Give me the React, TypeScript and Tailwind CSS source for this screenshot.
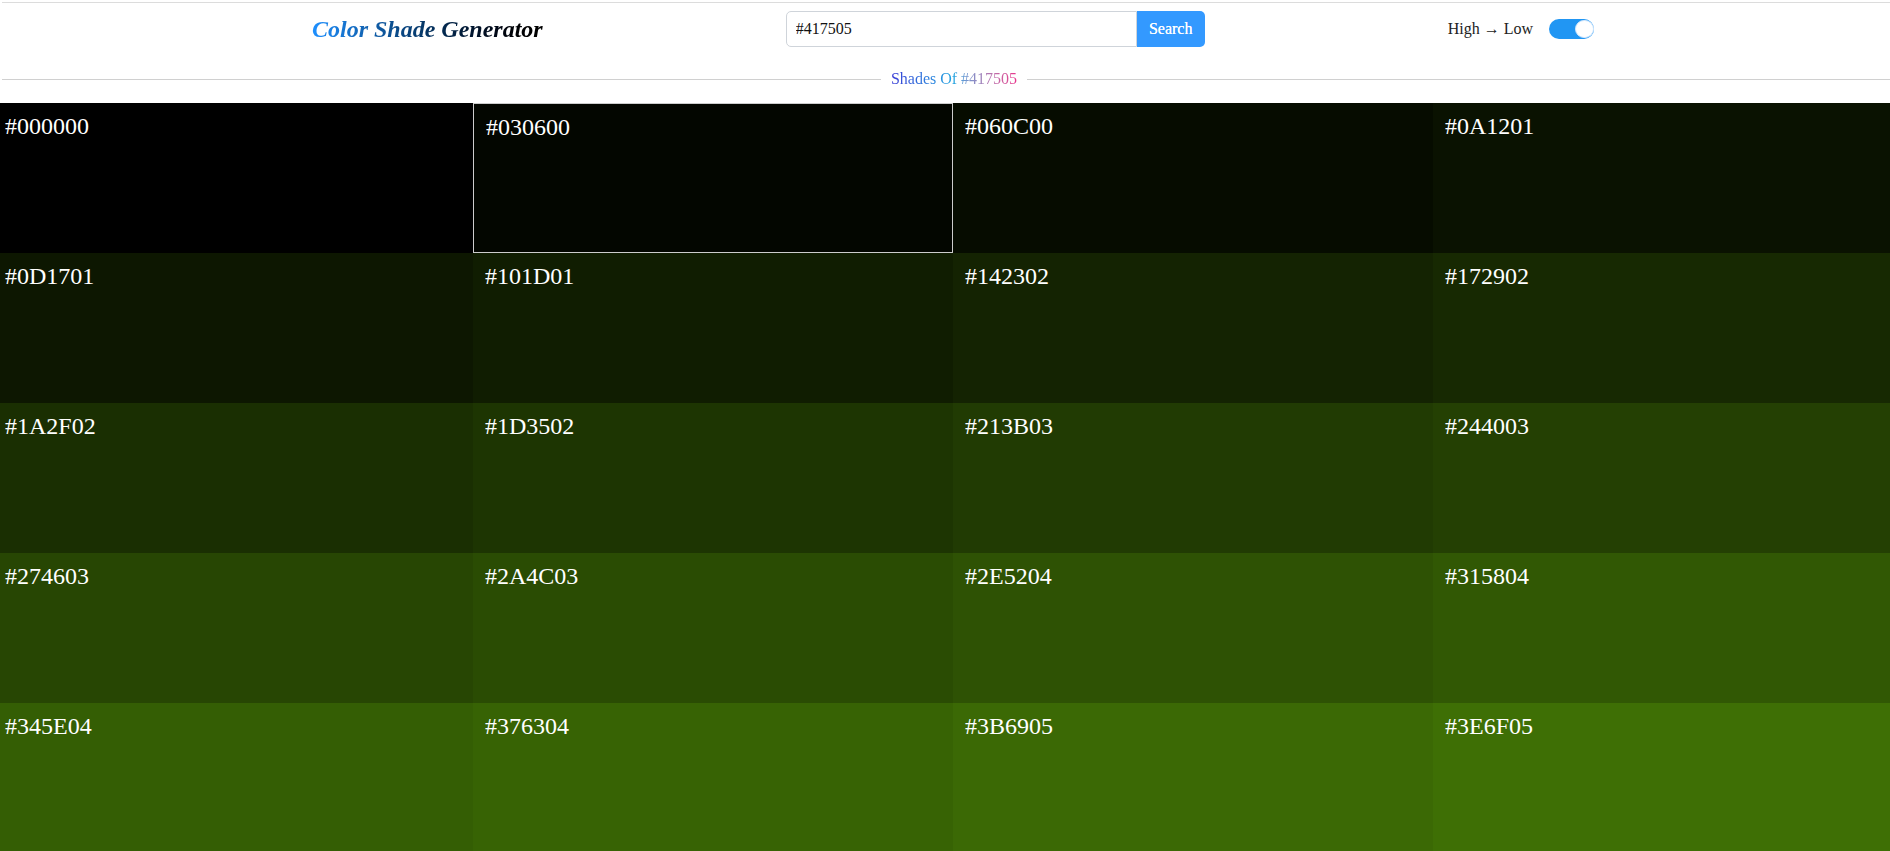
import React from 'react';

const BASE = '#417505';

const toHex = (n: number) => Math.round(n).toString(16).padStart(2, '0').toUpperCase();

// shades from black up to the base colour (as the app prints them)
const DARK = [
  '#000000', '#030600', '#060C00', '#0A1201',
  '#0D1701', '#101D01', '#142302', '#172902',
  '#1A2F02', '#1D3502', '#213B03', '#244003',
  '#274603', '#2A4C03', '#2E5204', '#315804',
  '#345E04', '#376304', '#3B6905', '#3E6F05',
];

const buildTints = (hex: string): string[] => {
  const r = parseInt(hex.slice(1, 3), 16);
  const g = parseInt(hex.slice(3, 5), 16);
  const b = parseInt(hex.slice(5, 7), 16);
  const out: string[] = [];
  for (let i = 0; i < 20; i++) {
    const k = i / 20;
    out.push('#' + toHex(r + (255 - r) * k) + toHex(g + (255 - g) * k) + toHex(b + (255 - b) * k));
  }
  return out;
};

const Header: React.FC = () => (
  <header className="flex h-[52px] items-center justify-center gap-[243px]">
    <h1 className="bg-linear-to-r from-[#1e90ff] to-black bg-clip-text text-[24px] font-bold italic leading-[28px] text-transparent">
      Color Shade Generator
    </h1>

    <form className="flex h-[36px]" onSubmit={(e) => e.preventDefault()}>
      <input
        type="text"
        defaultValue={BASE}
        className="h-full w-[351px] rounded-l-[5px] border border-[#cfd4da] bg-white px-[9px] text-[16px] text-[#111] outline-none"
      />
      <button type="submit" className="h-full w-[68px] rounded-r-[5px] bg-[#3399ff] text-[16px] text-white [text-shadow:0_0_0.4px_white]">
        Search
      </button>
    </form>

    <div className="flex items-center gap-[16px]">
      <span className="text-[16px] text-[#222]">High → Low</span>
      <div className="relative h-[20px] w-[45px] rounded-full bg-[#2196f3]">
        <span className="absolute right-0 top-[1px] h-[18px] w-[19px] rounded-full border border-[#cfe6fd] bg-white" />
      </div>
    </div>
  </header>
);

const Divider: React.FC = () => (
  <div className="mt-[15px] flex h-[18px] items-center pl-[2px]">
    <div className="h-px flex-1 bg-[#d0d0d0]" />
    <span className="mx-[10px] bg-linear-to-r from-[#3a3ad6] via-[#1fa4e0] to-[#e8308c] bg-clip-text text-[16px] leading-[18px] text-transparent">
      Shades Of {BASE}
    </span>
    <div className="h-px flex-1 bg-[#d0d0d0]" />
  </div>
);

export default function App() {
  const shades = [...DARK, ...buildTints(BASE)];

  return (
    <div className="h-screen w-full overflow-hidden bg-white font-['Liberation_Serif',serif]">
      <div className="w-[1906px]">
        <div className="ml-[2px] mt-[2px] h-px bg-[#dcdcdc]" />
        <Header />
        <Divider />

        <div className="ml-[-7px] mt-[15px] grid w-[1920px] grid-cols-4">
          {shades.map((c, i) => (
            <div
              key={c + i}
              style={{ backgroundColor: c }}
              className={
                i === 1
                  ? 'h-[150px] border border-[#cccccc] px-[12px] pt-[5px] text-[24px] text-white'
                  : 'h-[150px] px-[12px] pt-[5px] text-[24px] text-white'
              }
            >
              {c}
            </div>
          ))}
        </div>
      </div>
    </div>
  );
}
